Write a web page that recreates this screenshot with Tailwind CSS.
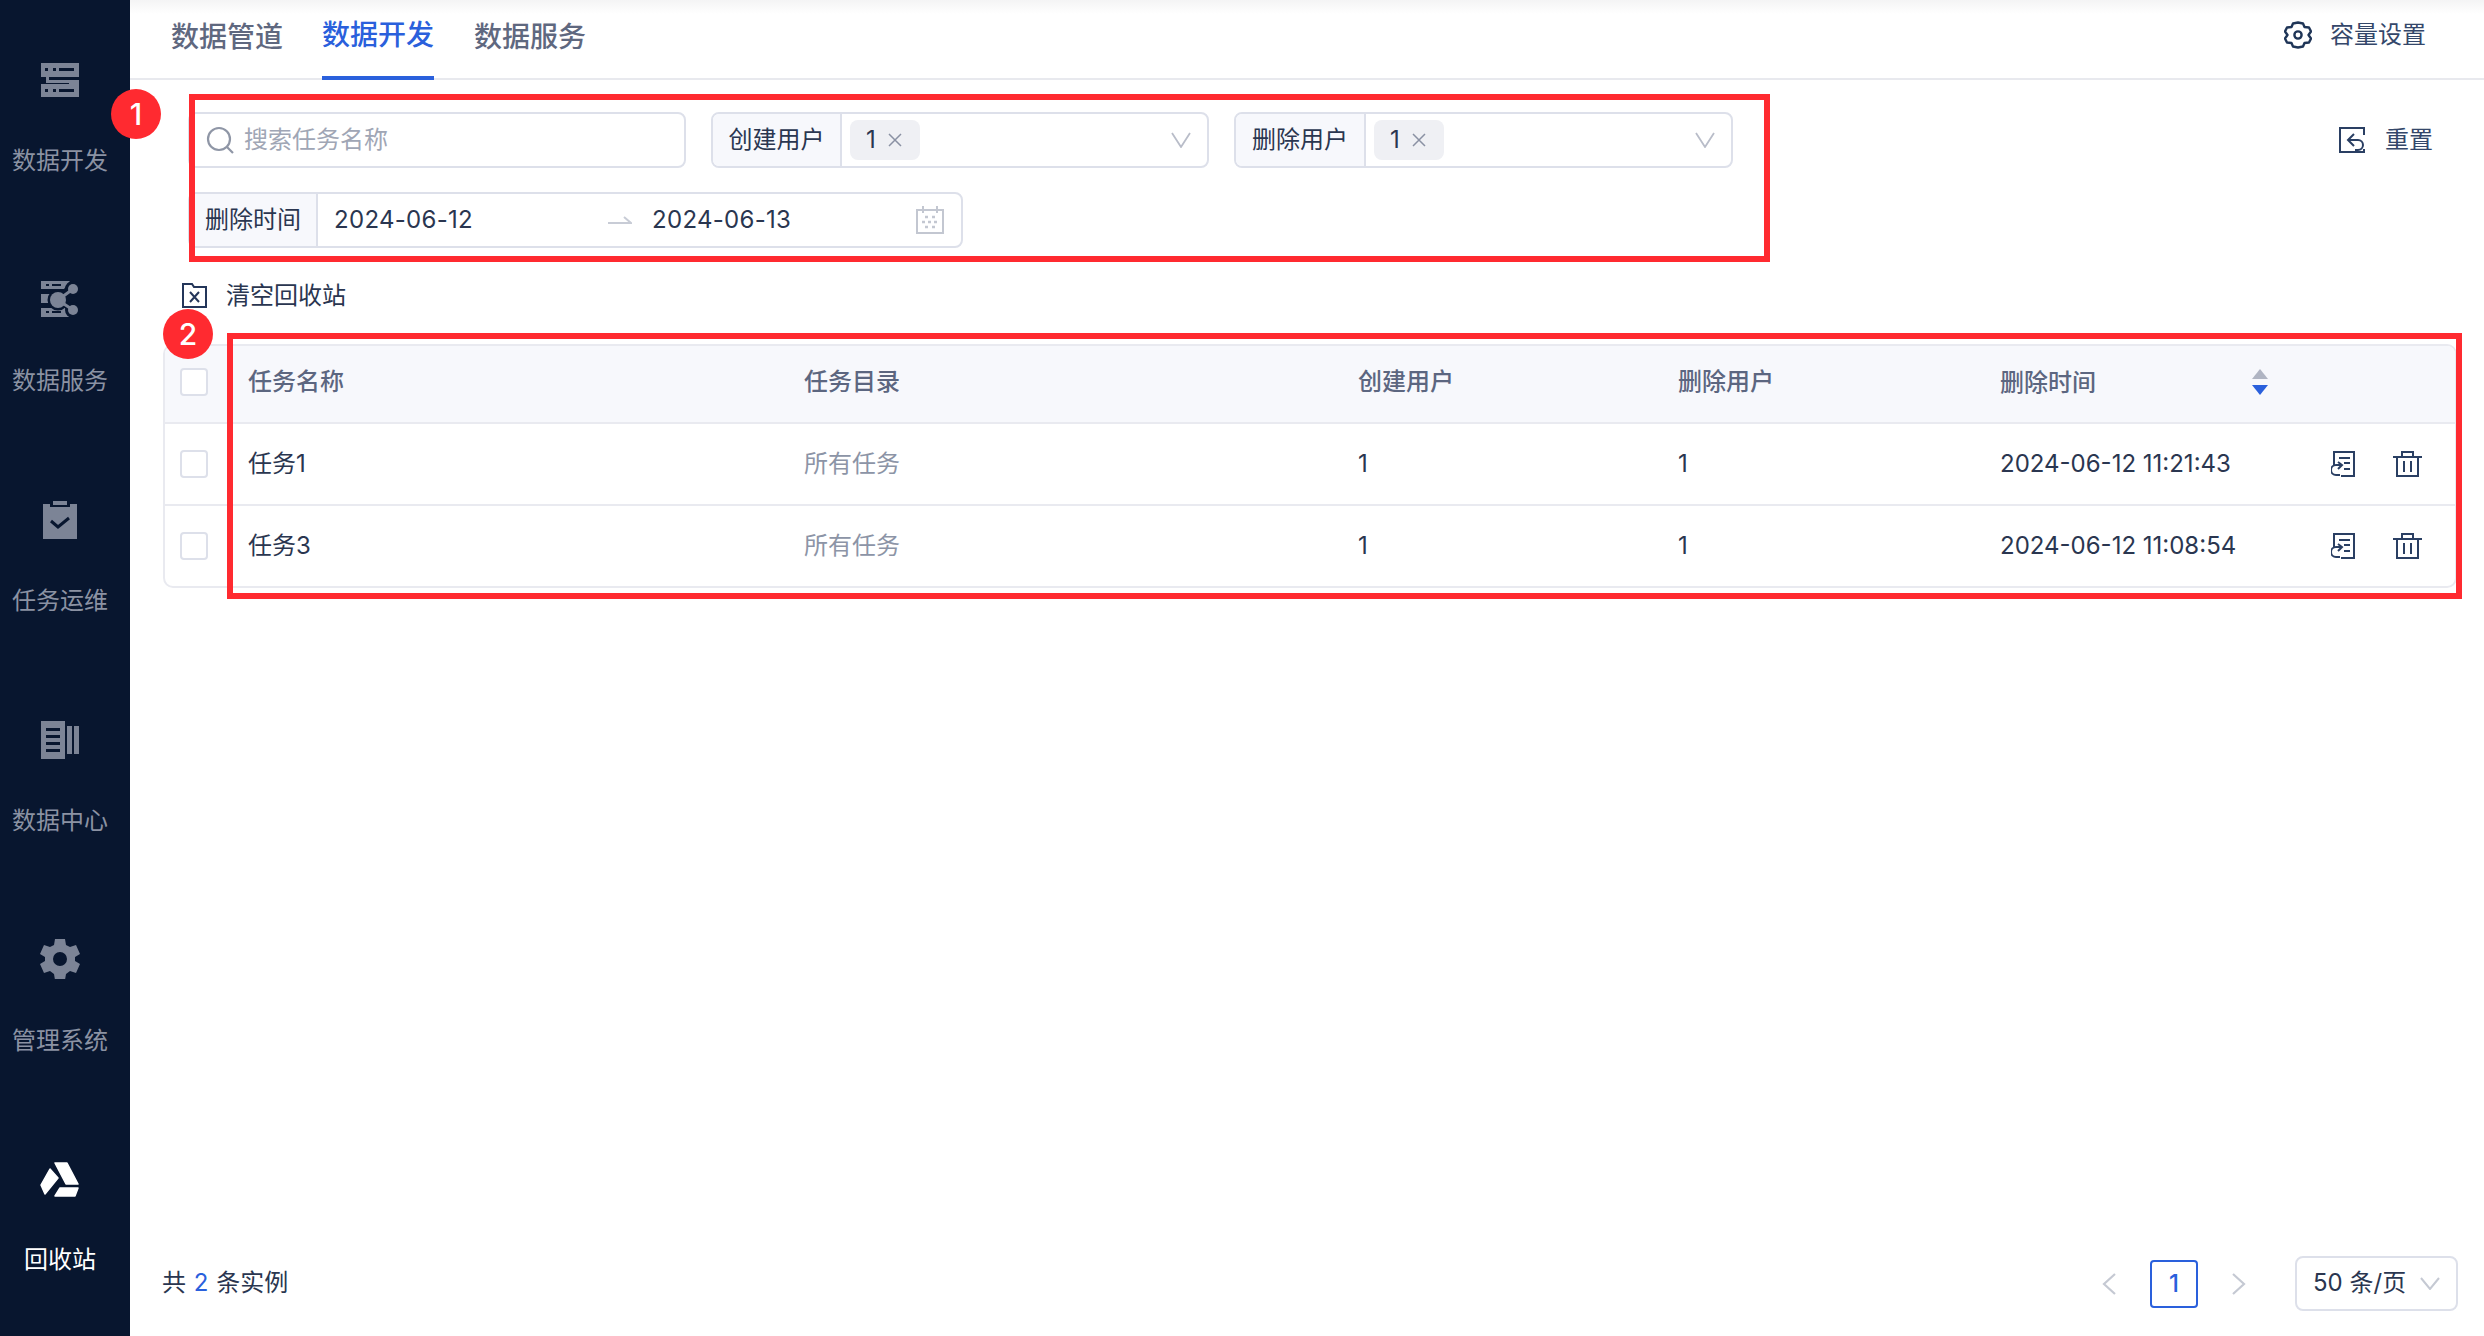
<!DOCTYPE html>
<html lang="zh-CN">
<head>
    <meta charset="UTF-8">
    <title>回收站</title>
    <script src="https://cdn.jsdelivr.net/npm/@tailwindcss/browser@4"></script>
</head>
<body class="bg-white">
<div class="relative flex w-[2484px] h-[1336px] overflow-hidden font-['Inter','Noto_Sans_CJK_SC',sans-serif] text-[24px] leading-[32px] text-[#2a3650]">

    <!-- sidebar -->
    <aside class="w-[130px] shrink-0 bg-[#08162f] pr-[10px] flex flex-col text-[#8b92a3]">
        <div class="h-[220px] pt-[59px] flex flex-col items-center gap-[46px]">
            <svg class="w-[40px] h-[40px]" viewBox="0 0 40 40" fill="#7c8496"><path d="M1 4h38v14H9v3h30v17H1V25h28v-1H6v-6H1z"/><path fill="#08162f" d="M5 9h3v3H5zM13 9h3v3h-3zM19 9h15v3H19zM5 30h3v3H5zM13 30h3v3h-3zM19 30h15v3H19z"/></svg>
            <span>数据开发</span>
        </div>
        <div class="h-[220px] pt-[59px] flex flex-col items-center gap-[46px]">
            <svg class="w-[40px] h-[40px]" viewBox="0 0 40 40" fill="#7c8496"><path d="M1 2h29l-6 8H1zM1 15h10v9H1zM1 29h24l5 9H1z"/><path fill="#08162f" d="M6 5h3v2H6zM12 5h9v2h-9zM6 32h3v2H6zM12 32h9v2h-9z"/><g stroke="#08162f" stroke-width="4"><circle cx="18" cy="21" r="8.500"/><circle cx="33" cy="10" r="6"/><circle cx="33" cy="31" r="6"/></g><circle cx="18" cy="21" r="8"/><circle cx="33" cy="10" r="5"/><circle cx="33" cy="31" r="5"/><path d="M18 21L33 10M18 21l15 10" stroke="#7c8496" stroke-width="3"/></svg>
            <span>数据服务</span>
        </div>
        <div class="h-[220px] pt-[59px] flex flex-col items-center gap-[46px]">
            <svg class="w-[40px] h-[40px]" viewBox="0 0 40 40" fill="#7c8496"><path d="M3 5h7v3h20V5h7v35H3z"/><path d="M13 2h14v4H13z"/><path d="M11 22l7 6 11-9" fill="none" stroke="#08162f" stroke-width="3"/></svg>
            <span>任务运维</span>
        </div>
        <div class="h-[220px] pt-[59px] flex flex-col items-center gap-[46px]">
            <svg class="w-[40px] h-[40px]" viewBox="0 0 40 40" fill="#7c8496"><path d="M1 2h24v38H1z"/><path d="M6 9h14v3H6zM6 16h14v3H6zM6 23h14v3H6zM6 30h14v3H6z" fill="#08162f"/><path d="M27 7h5v28h-5zM34 7h5v28h-5z"/></svg>
            <span>数据中心</span>
        </div>
        <div class="h-[220px] pt-[59px] flex flex-col items-center gap-[46px]">
            <svg class="w-[40px] h-[40px]" viewBox="0 0 40 40" fill="#7c8496"><path fill-rule="evenodd" d="M15 0h10l1 6 4 2 6-2 4 9-5 3v4l5 3-4 9-6-2-4 3-1 6H15l-1-6-4-3-6 2-4-9 5-3v-4l-5-3 4-9 6 2 4-2zM20 13a7 7 0 100 14 7 7 0 000-14z"/></svg>
            <span>管理系统</span>
        </div>
        <div class="h-[216px] pt-[58px] flex flex-col items-center gap-[46px] text-white">
            <svg class="w-[40px] h-[40px]" viewBox="0 0 40 40" fill="#ffffff" stroke="#ffffff" stroke-width="1.500" stroke-linejoin="round"><path d="M15 5h12l11 21H26zM10 11l8 9-13 16-4-9zM20 30h18l-3 8H15z"/></svg>
            <span>回收站</span>
        </div>
    </aside>

    <main class="relative flex-1 flex flex-col min-w-0">
        <div class="absolute top-0 left-0 right-0 h-[14px] bg-gradient-to-b from-[#f4f4f5] to-white"></div>

        <!-- tabs -->
        <div class="relative h-[80px] shrink-0 border-b-2 border-[#e8e9ee] pl-[41px] pr-[58px] flex justify-between">
            <div class="flex gap-[39px] text-[28px] font-medium text-[#5f687f]">
                <div class="h-[80px] w-[112px] flex items-center pb-[6px]">数据管道</div>
                <div class="h-[80px] w-[112px] flex items-center pb-[6px] text-[#2a60dc] border-b-4 border-[#2a60dc]">数据开发</div>
                <div class="h-[80px] w-[112px] flex items-center pb-[6px] ml-[1px]">数据服务</div>
            </div>
            <div class="flex items-center gap-[18px] pb-[8px] text-[#34476a]">
                <svg class="w-[28px] h-[28px]" viewBox="0 0 28 28" fill="none" stroke="#1f3557" stroke-width="2.400" stroke-linejoin="round"><path d="M9 2.500l5-1 5 1 1.500 3.500 4.500.500 2 4-2.500 3.500 2.500 3.500-2 4-4.500.500-1.500 3.500-5 1-5-1-1.500-3.500-4.500-.500-2-4 2.500-3.500L1 10.500l2-4 4.500-.500z"/><circle cx="14" cy="14" r="3.600"/></svg>
                <span>容量设置</span>
            </div>
        </div>

        <!-- filters -->
        <div class="pl-[58px] pr-[51px] pt-[32px] flex justify-between items-start">
            <div class="flex flex-col gap-[24px]">
                <div class="flex gap-[25px]">
                    <div class="w-[498px] h-[56px] border-2 border-[#dde0ea] rounded-[8px] flex items-center pl-[16px] gap-[10px] text-[#a0a6b5]">
                        <svg class="w-[28px] h-[28px]" viewBox="0 0 28 28" fill="none" stroke="#8f96a6" stroke-width="2.200"><circle cx="13" cy="13" r="11"/><path d="M21 21l6 6"/></svg>
                        <span>搜索任务名称</span>
                    </div>
                    <div class="w-[498px] h-[56px] border-2 border-[#dde0ea] rounded-[8px] flex items-center overflow-hidden">
                        <div class="w-[129px] h-full bg-[#f7f8fc] border-r-2 border-[#dde0ea] flex items-center justify-center">创建用户</div>
                        <div class="ml-[8px] w-[70px] h-[40px] bg-[#eff0f4] rounded-[8px] flex items-center pl-[16px] gap-[12px]">1
                            <svg class="w-[14px] h-[14px]" viewBox="0 0 14 14" stroke="#8a91a3" stroke-width="1.500"><path d="M1 1l12 12M13 1L1 13"/></svg>
                        </div>
                        <svg class="ml-auto mr-[16px] w-[20px] h-[16px]" viewBox="0 0 20 16" fill="none" stroke="#b9bdc9" stroke-width="1.800"><path d="M1 1l9 14 9-14"/></svg>
                    </div>
                    <div class="w-[499px] h-[56px] border-2 border-[#dde0ea] rounded-[8px] flex items-center overflow-hidden">
                        <div class="w-[130px] h-full bg-[#f7f8fc] border-r-2 border-[#dde0ea] flex items-center justify-center">删除用户</div>
                        <div class="ml-[8px] w-[70px] h-[40px] bg-[#eff0f4] rounded-[8px] flex items-center pl-[16px] gap-[12px]">1
                            <svg class="w-[14px] h-[14px]" viewBox="0 0 14 14" stroke="#8a91a3" stroke-width="1.500"><path d="M1 1l12 12M13 1L1 13"/></svg>
                        </div>
                        <svg class="ml-auto mr-[16px] w-[20px] h-[16px]" viewBox="0 0 20 16" fill="none" stroke="#b9bdc9" stroke-width="1.800"><path d="M1 1l9 14 9-14"/></svg>
                    </div>
                </div>
                <div class="w-[775px] h-[56px] border-2 border-[#dde0ea] rounded-[8px] flex items-center overflow-hidden">
                    <div class="w-[128px] h-full bg-[#f7f8fc] border-r-2 border-[#dde0ea] flex items-center justify-center">删除时间</div>
                    <span class="ml-[16px] w-[274px] tracking-[0.3px]">2024-06-12</span>
                    <svg class="w-[24px] h-[10px]" viewBox="0 0 24 10" fill="none" stroke="#c8ccd6" stroke-width="2"><path d="M0 8h23L16 2"/></svg>
                    <span class="ml-[20px] tracking-[0.3px]">2024-06-13</span>
                    <svg class="ml-auto mr-[17px] w-[28px] h-[28px]" viewBox="0 0 28 28" fill="none" stroke="#c3c7d1" stroke-width="2"><path d="M1 4h26v23H1zM7 0v7M21 0v7"/><path d="M9 11h3M16 11h3M6 16h3M12 16h3M18 16h3M9 21h3M16 21h3" stroke-width="2.500"/></svg>
                </div>
            </div>
            <div class="flex items-center gap-[20px] h-[56px] text-[#34476a]">
                <svg class="w-[26px] h-[26px]" viewBox="0 0 26 26" fill="none" stroke="#2a3f63" stroke-width="2"><path d="M25 8V1H1v24h24v-3"/><path d="M15 7l-6 6 6 6M9 13h10a4 4 0 010 10h-3"/></svg>
                <span>重置</span>
            </div>
        </div>

        <!-- clear recycle bin -->
        <div class="pl-[52px] mt-[32px] h-[32px] flex items-center gap-[19px]">
            <svg class="w-[25px] h-[25px] -translate-y-[1px]" viewBox="0 0 25 25" fill="none" stroke="#24365a" stroke-width="2"><path d="M1 4V1h9l2 3h12v20H1z"/><path d="M8 9l9 10M17 9L8 19"/></svg>
            <span>清空回收站</span>
        </div>

        <!-- table -->
        <div class="ml-[33px] mr-[27px] mt-[32px] border-2 border-[#e9eaf0] rounded-[10px] overflow-hidden">
            <div class="grid grid-cols-[83px_556px_554px_320px_322px_1fr] items-center h-[78px] pb-[4px] bg-[#f7f8fc] border-b-2 border-[#e9eaf0] font-medium text-[#5c6680]">
                <div class="pl-[15px]"><div class="w-[28px] h-[28px] bg-white border-2 border-[#dde0ea] rounded-[4px]"></div></div>
                <div>任务名称</div>
                <div>任务目录</div>
                <div>创建用户</div>
                <div>删除用户</div>
                <div class="flex items-center">
                    <span class="w-[252px] pt-[2px]">删除时间</span>
                    <svg class="w-[16px] h-[26px]" viewBox="0 0 16 26"><path d="M8 0l8 10H0z" fill="#b0b5c3"/><path d="M8 26L0 16h16z" fill="#2a60dc"/></svg>
                </div>
            </div>
            <div class="grid grid-cols-[83px_556px_554px_320px_322px_1fr] items-center h-[82px] border-b-2 border-[#e9eaf0]">
                <div class="pl-[15px]"><div class="w-[28px] h-[28px] bg-white border-2 border-[#dde0ea] rounded-[4px]"></div></div>
                <div>任务1</div>
                <div class="text-[#8c94a6]">所有任务</div>
                <div>1</div>
                <div>1</div>
                <div class="flex items-center">
                    <span class="w-[331px] whitespace-nowrap">2024-06-12 11:21:43</span>
                    <svg class="w-[24px] h-[26px]" viewBox="0 0 24 26" fill="none" stroke="#2a3f63" stroke-width="2"><path d="M3 14V1h20v24H10M8 7h11M13 12h6M13 18h6"/><path d="M10 14H5a3.500 3.500 0 000 10h4M7 11l4 3-4 4"/></svg>
                    <svg class="ml-[38px] w-[29px] h-[26px]" viewBox="0 0 29 26" fill="none" stroke="#2a3f63" stroke-width="2"><path d="M0 6h29M9 6V1h11v5M4 6v19h21V6M11 10v11M18 10v11"/></svg>
                </div>
            </div>
            <div class="grid grid-cols-[83px_556px_554px_320px_322px_1fr] items-center h-[80px]">
                <div class="pl-[15px]"><div class="w-[28px] h-[28px] bg-white border-2 border-[#dde0ea] rounded-[4px]"></div></div>
                <div>任务3</div>
                <div class="text-[#8c94a6]">所有任务</div>
                <div>1</div>
                <div>1</div>
                <div class="flex items-center">
                    <span class="w-[331px] whitespace-nowrap">2024-06-12 11:08:54</span>
                    <svg class="w-[24px] h-[26px]" viewBox="0 0 24 26" fill="none" stroke="#2a3f63" stroke-width="2"><path d="M3 14V1h20v24H10M8 7h11M13 12h6M13 18h6"/><path d="M10 14H5a3.500 3.500 0 000 10h4M7 11l4 3-4 4"/></svg>
                    <svg class="ml-[38px] w-[29px] h-[26px]" viewBox="0 0 29 26" fill="none" stroke="#2a3f63" stroke-width="2"><path d="M0 6h29M9 6V1h11v5M4 6v19h21V6M11 10v11M18 10v11"/></svg>
                </div>
            </div>
        </div>

        <!-- footer -->
        <div class="mt-auto mb-[25px] pl-[32px] pr-[26px] h-[55px] flex items-center justify-between">
            <div class="whitespace-pre pb-[2px]">共 <span class="text-[#2a60dc] px-[1px]">2</span> 条实例</div>
            <div class="flex items-center">
                <svg class="w-[14px] h-[22px]" viewBox="0 0 14 22" fill="none" stroke="#c5c9d3" stroke-width="2.200"><path d="M13 1L2 11l11 10"/></svg>
                <div class="ml-[34px] w-[48px] h-[48px] border-2 border-[#2a60dc] rounded-[4px] flex items-center justify-center text-[#2a60dc] font-medium">1</div>
                <svg class="ml-[34px] w-[14px] h-[22px]" viewBox="0 0 14 22" fill="none" stroke="#c5c9d3" stroke-width="2.200"><path d="M1 1l11 10L1 21"/></svg>
                <div class="ml-[49px] w-[163px] h-[55px] border-2 border-[#dde0ea] rounded-[8px] flex items-center pl-[16px]">
                    <span class="whitespace-nowrap pb-[2px]">50 条/页</span>
                    <svg class="ml-auto mr-[16px] w-[20px] h-[13px]" viewBox="0 0 20 13" fill="none" stroke="#c5c9d3" stroke-width="2"><path d="M1 1l9 11 9-11"/></svg>
                </div>
            </div>
        </div>
    </main>

    <!-- annotations -->
    <div class="absolute left-[189px] top-[94px] w-[1581px] h-[168px] border-[6px] border-[#ff2a30]"></div>
    <div class="absolute left-[227px] top-[333px] w-[2235px] h-[266px] border-[6px] border-[#ff2a30]"></div>
    <div class="absolute left-[111px] top-[89px] w-[50px] h-[50px] rounded-full bg-[#ff2a30] text-white text-[30px] font-medium flex items-center justify-center">1</div>
    <div class="absolute left-[163px] top-[309px] w-[50px] h-[50px] rounded-full bg-[#ff2a30] text-white text-[30px] font-medium flex items-center justify-center">2</div>
</div>
</body>
</html>
